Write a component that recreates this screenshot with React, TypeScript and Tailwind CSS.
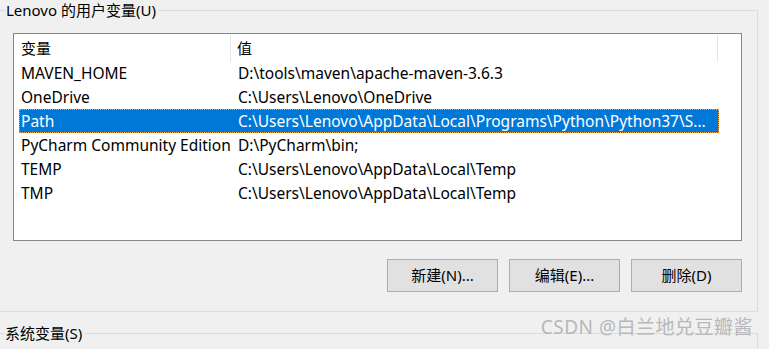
const rows = [
  { name: "MAVEN_HOME", value: "D:\\tools\\maven\\apache-maven-3.6.3" },
  { name: "OneDrive", value: "C:\\Users\\Lenovo\\OneDrive" },
  { name: "Path", value: "C:\\Users\\Lenovo\\AppData\\Local\\Programs\\Python\\Python37\\S...", selected: true },
  { name: "PyCharm Community Edition", value: "D:\\PyCharm\\bin;" },
  { name: "TEMP", value: "C:\\Users\\Lenovo\\AppData\\Local\\Temp" },
  { name: "TMP", value: "C:\\Users\\Lenovo\\AppData\\Local\\Temp" },
];

const font = "font-['Noto_Sans','Noto_Sans_CJK_SC',sans-serif]";

const Button = ({ label }: { label: string }) => (
  <button className="w-[111px] h-[33px] bg-[#e1e1e1] border border-[#adadad] text-[15px] text-black leading-none">
    {label}
  </button>
);

export default function App() {
  return (
    <div className={`${font} relative w-[769px] h-[349px] overflow-hidden bg-[#f0f0f0] text-black pt-[10px]`}>
      {/* user variables group */}
      <div className="relative ml-[-2px] w-[760px] border border-[#dcdcdc] pl-[14px] pt-[22px] pb-[19px]">
        <span className="absolute left-[7px] top-[-12px] bg-[#f0f0f0] pr-[2px] text-[15px] leading-[22px]">
          Lenovo 的用户变量(U)
        </span>

        <div className="w-[729px] h-[208px] border border-[#828790] bg-white">
          {/* header */}
          <div className="flex h-[27px] items-center text-[15px]">
            <div className="w-[217px] h-full flex items-center pl-[7px] border-r border-[#e5e5e5] mt-[2px]">变量</div>
            <div className="w-[487px] h-full flex items-center pl-[6px] border-r border-[#e5e5e5] mt-[2px]">值</div>
          </div>
          {/* rows */}
          <div className="pl-[5px]">
            {rows.map((r) => (
              <div
                key={r.name}
                className={`flex w-[700px] h-[24px] items-center pt-[1px] text-[15.5px] whitespace-nowrap ${
                  r.selected
                    ? "bg-[#0078d7] text-white border border-dotted border-[#f5a040]"
                    : "border border-transparent"
                }`}
              >
                <div className="w-[212px] pl-[1px]">{r.name}</div>
                <div className="pl-[6px]">{r.value}</div>
              </div>
            ))}
          </div>
        </div>

        <div className="flex justify-end gap-[11px] w-[729px] mt-[18px]">
          <Button label="新建(N)..." />
          <Button label="编辑(E)..." />
          <Button label="删除(D)" />
        </div>
      </div>

      {/* system variables group */}
      <div className="relative ml-[-2px] mt-[21px] w-[760px] h-[40px] border-t border-r border-[#dcdcdc]">
        <span className="absolute left-[7px] top-[-12px] bg-[#f0f0f0] pr-[2px] text-[15px] leading-[22px]">
          系统变量(S)
        </span>
      </div>

      <span className="absolute right-[16px] bottom-[8px] text-[19px] text-[#b8b8b8] tracking-[0.5px]">
        CSDN @白兰地兑豆瓣酱
      </span>
    </div>
  );
}
